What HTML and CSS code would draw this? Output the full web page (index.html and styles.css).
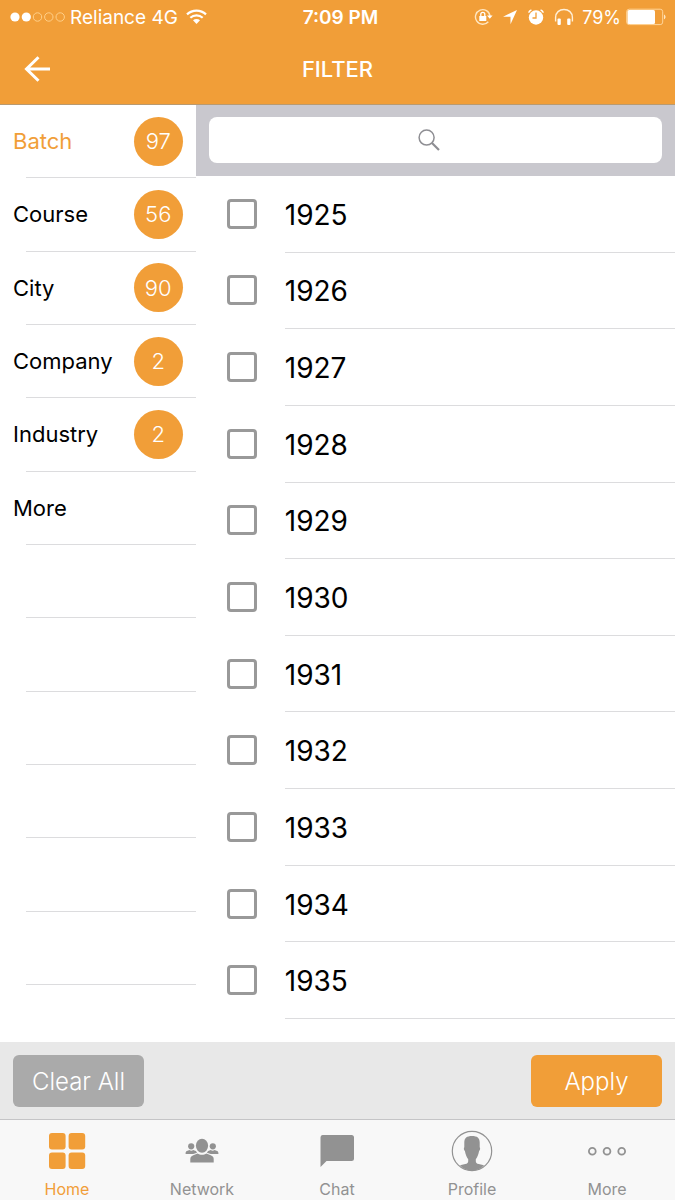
FILE: index.html
```html
<!DOCTYPE html>
<html lang="en">
<head>
<meta charset="utf-8">
<meta name="viewport" content="width=device-width, initial-scale=1">
<title>Filter</title>
<link rel="stylesheet" href="styles.css">
</head>
<body>
<header class="top">
  <div class="status">
    <div class="status-left">
      <svg class="signal" width="56" height="12" viewBox="0 0 56 12" aria-hidden="true">
        <g fill="#fff"><circle cx="5" cy="6" r="4.600"/><circle cx="16.300" cy="6" r="4.600"/></g>
        <g fill="none" stroke="#ffd08a" stroke-width="1"><circle cx="27.500" cy="6" r="4.200"/><circle cx="38.800" cy="6" r="4.200"/><circle cx="50.200" cy="6" r="4.200"/></g>
      </svg>
      <span class="carrier">Reliance 4G</span>
      <svg width="21" height="16" viewBox="0 0 21 16" aria-hidden="true">
        <g fill="none" stroke="#fff" stroke-width="2.200"><path d="M1 5.400C6.300.3 14.700.3 20 5.400"/><path d="M4.300 8.800c3.500-3.300 8.900-3.300 12.400 0"/></g>
        <path fill="#fff" d="M7 11.300c2-1.800 5-1.800 7 0L10.500 15z"/>
      </svg>
    </div>
    <time class="clock">7:09 PM</time>
    <div class="status-right">
      <svg width="19" height="18" viewBox="0 0 19 18" aria-hidden="true">
        <path d="M14.300 13.700A7.300 7.300 0 1 1 16 8" fill="none" stroke="#ffe6c0" stroke-width="1.400"/>
        <path fill="#fff" d="M13 7.500h5.600l-2.800 3.200zM5.300 8h7v5h-7z"/>
        <path d="M6.800 8V6.300a2 2 0 0 1 4 0V8" fill="none" stroke="#fff" stroke-width="1.300"/>
      </svg>
      <svg width="16" height="16" viewBox="0 0 16 16" aria-hidden="true"><path fill="#fff" d="M15 1 8.500 15.200V7.700H1z"/></svg>
      <svg width="18" height="18" viewBox="0 0 18 18" aria-hidden="true">
        <circle cx="9" cy="9.500" r="7.200" fill="#fff"/>
        <path d="M1.700 4.600c.4-1.400 1.300-2.300 2.700-2.700M16.300 4.600c-.4-1.400-1.300-2.300-2.700-2.700" fill="none" stroke="#fff" stroke-width="1.600"/>
        <path d="M9 4.500v5.500H5.500" fill="none" stroke="#f19e38" stroke-width="1.300"/>
      </svg>
      <svg width="20" height="18" viewBox="0 0 20 18" aria-hidden="true">
        <path d="M1.600 13.500V9.500C1.600 4.500 5.300 1.500 10 1.500s8.400 3 8.400 8v4" fill="none" stroke="#fff0d8" stroke-width="1.400"/>
        <rect x="3.500" y="10.500" width="3.300" height="6.500" rx="1" fill="#fff"/><rect x="13.200" y="10.500" width="3.300" height="6.500" rx="1" fill="#fff"/>
      </svg>
      <span class="percent">79%</span>
      <svg width="40" height="18" viewBox="0 0 40 18" aria-hidden="true">
        <rect x=".7" y="1.200" width="36" height="15.400" rx="2.500" fill="none" stroke="#ffd59a"/>
        <rect x="1.500" y="2" width="27.500" height="14" rx="1.500" fill="#fff"/>
        <path d="M38 6.500c2 .8 2 4 0 4.800z" fill="#ffe6c0"/>
      </svg>
    </div>
  </div>
  <nav class="titlebar">
    <button class="back" type="button" aria-label="Back">
      <svg width="28" height="28" viewBox="0 0 28 28" aria-hidden="true"><path d="M15.500 2.300 3.500 14l12 11.700M3.500 14H27" fill="none" stroke="#fff" stroke-width="3"/></svg>
    </button>
    <h1 class="title">FILTER</h1>
  </nav>
</header>

<main class="main">
  <ul class="categories">
    <li><a class="category active" href="#batch">Batch <span class="count">97</span></a></li>
    <li><a class="category" href="#course">Course <span class="count">56</span></a></li>
    <li><a class="category" href="#city">City <span class="count">90</span></a></li>
    <li><a class="category" href="#company">Company <span class="count">2</span></a></li>
    <li><a class="category" href="#industry">Industry <span class="count">2</span></a></li>
    <li><a class="category" href="#more">More</a></li>
    <li></li><li></li><li></li><li></li><li></li><li></li>
  </ul>
  <section class="panel" id="batch">
    <div class="searchbar">
      <label class="search">
        <svg class="search-icon" width="22" height="22" viewBox="0 0 22 22" role="img" aria-label="Search">
          <circle cx="8.600" cy="8.600" r="7.500" fill="none" stroke="#8e8e93" stroke-width="1.500"/><path d="m14 14 7 7" stroke="#8e8e93" stroke-width="2.200"/>
        </svg>
        <input class="search-input" type="search">
      </label>
    </div>
    <div class="options">
      <label class="option"><input class="check" type="checkbox"><span class="year">1925</span></label>
      <label class="option"><input class="check" type="checkbox"><span class="year">1926</span></label>
      <label class="option"><input class="check" type="checkbox"><span class="year">1927</span></label>
      <label class="option"><input class="check" type="checkbox"><span class="year">1928</span></label>
      <label class="option"><input class="check" type="checkbox"><span class="year">1929</span></label>
      <label class="option"><input class="check" type="checkbox"><span class="year">1930</span></label>
      <label class="option"><input class="check" type="checkbox"><span class="year">1931</span></label>
      <label class="option"><input class="check" type="checkbox"><span class="year">1932</span></label>
      <label class="option"><input class="check" type="checkbox"><span class="year">1933</span></label>
      <label class="option"><input class="check" type="checkbox"><span class="year">1934</span></label>
      <label class="option"><input class="check" type="checkbox"><span class="year">1935</span></label>
    </div>
  </section>
</main>

<div class="actions">
  <button class="action clear" type="button">Clear All</button>
  <button class="action apply" type="button">Apply</button>
</div>

<nav class="tabs">
  <a class="tab active" href="#home">
    <svg width="44" height="44" viewBox="0 0 44 44" fill="currentColor" aria-hidden="true"><rect x="4" y="4" width="16.600" height="16.400" rx="3"/><rect x="23.600" y="4" width="16.600" height="16.400" rx="3"/><rect x="4" y="23.600" width="16.600" height="16.400" rx="3"/><rect x="23.600" y="23.600" width="16.600" height="16.400" rx="3"/></svg>
    <span>Home</span>
  </a>
  <a class="tab" href="#network">
    <svg width="44" height="44" viewBox="0 0 44 44" fill="currentColor" aria-hidden="true">
      <ellipse cx="22" cy="16.800" rx="6.100" ry="7"/>
      <path d="M10.300 33.500v-3.200c0-2.200 1-3.200 3-4l4.200-1.800c2.600 1.800 6.400 1.800 9 0l4.200 1.800c2 .8 3 1.800 3 4v3.200z"/>
      <circle cx="11.200" cy="17.300" r="3.100"/><circle cx="32.800" cy="17.300" r="3.100"/>
      <path d="M5.600 25v-1c0-1.300.8-1.700 2-2.200l1.800-.7c1.200.8 2.700.8 3.800 0l2.600 1c.8.800 1 1.200 1.200 1.700L13.300 25zM38.400 25v-1c0-1.300-.8-1.700-2-2.200l-1.800-.7c-1.200.8-2.700.8-3.800 0l-2.600 1c-.8.800-1 1.200-1.200 1.700l3.700 1.200z"/>
    </svg>
    <span>Network</span>
  </a>
  <a class="tab" href="#chat">
    <svg width="44" height="44" viewBox="0 0 44 44" fill="currentColor" aria-hidden="true"><path d="M7.500 6h29a2.500 2.500 0 0 1 2.500 2.500v21a2.500 2.500 0 0 1-2.500 2.500H11.500L5.500 38V8.500A2.500 2.500 0 0 1 7.500 6z"/></svg>
    <span>Chat</span>
  </a>
  <a class="tab" href="#profile">
    <svg width="44" height="44" viewBox="0 0 44 44" aria-hidden="true">
      <circle cx="22" cy="22" r="19.700" fill="none" stroke="currentColor" stroke-width="1.200"/>
      <path fill="currentColor" d="M14.300 13.500c0-4.500 2.500-6.500 7.700-6.500s7.700 2 7.700 6.500v4.700c.8.600.4 3.200-.6 3.800-.6 3.500-1.900 6.400-3.300 8.200v2c0 1.700.9 2.300 2.900 2.800l5.300 1.300C31 40 27 41.700 22 41.700S13 40 10 36.300l5.300-1.300c2-.5 2.900-1.100 2.900-2.800v-2c-1.400-1.800-2.700-4.700-3.300-8.200-1-.6-1.400-3.200-.6-3.800z"/>
    </svg>
    <span>Profile</span>
  </a>
  <a class="tab" href="#more-tab">
    <svg width="44" height="44" viewBox="0 0 44 44" fill="none" stroke="currentColor" stroke-width="1.800" aria-hidden="true"><circle cx="7.300" cy="22.200" r="3.400"/><circle cx="22" cy="22.200" r="3.400"/><circle cx="36.700" cy="22.200" r="3.400"/></svg>
    <span>More</span>
  </a>
</nav>
</body>
</html>
```
FILE: styles.css
```css
:root {
  --orange: #f19e38;
  --line: #dcdcde;
}

* { box-sizing: border-box; }

body {
  margin: 0;
  min-height: 100vh;
  display: flex;
  flex-direction: column;
  background: #fff;
  color: #000;
  font-family: Inter, "Liberation Sans", sans-serif;
}

button, input { font: inherit; }
a { color: inherit; text-decoration: none; }

.top {
  background: var(--orange);
  border-bottom: 1px solid #b99a70;
  color: #fff;
}

.status {
  display: grid;
  grid-template-columns: 1fr auto 1fr;
  align-items: center;
  height: 34px;
  padding: 0 9px 0 10px;
  font-size: 19px;
}

.status-left, .status-right {
  display: flex;
  align-items: center;
  gap: 8px;
}

.status-right { justify-content: flex-end; gap: 9px; }
.signal { margin-right: -4px; }

.clock {
  padding-left: 5px;
  font-weight: 600;
}

.percent {
  margin: 0 -4px 0 -1px;
  font-size: 18px;
}

.titlebar {
  display: grid;
  grid-template-columns: 1fr auto 1fr;
  align-items: center;
  height: 70px;
  padding: 0 23px;
}

.back {
  display: flex;
  justify-self: start;
  padding: 0;
  border: 0;
  background: none;
}

.title {
  margin: 0;
  font-size: 22px;
  font-weight: 500;
}

.main {
  flex: 1;
  display: flex;
}

.categories {
  flex: 0 0 29%;
  display: grid;
  grid-template-rows: repeat(12, 1fr);
  margin: 0;
  padding: 0 0 57px;
  list-style: none;
  font-size: 22px;
}

.categories li {
  display: flex;
  background: linear-gradient(var(--line), var(--line)) no-repeat 26px 100% / 100% 1px;
}

.category {
  flex: 1;
  display: flex;
  align-items: center;
  justify-content: space-between;
  padding: 0 13px 1px;
}

.category.active { color: var(--orange); }

.count {
  display: grid;
  place-items: center;
  width: 49px;
  height: 49px;
  border-radius: 50%;
  background: var(--orange);
  color: #fff;
  font-weight: 300;
}

.panel {
  flex: 1;
  display: flex;
  flex-direction: column;
}

.searchbar {
  padding: 12px 13px 13px;
  background: #c9c8ce;
}

.search {
  position: relative;
  display: block;
}

.search-icon {
  position: absolute;
  inset: 0;
  margin: auto;
  left: -12px;
}

.search-input {
  display: block;
  width: 100%;
  height: 46px;
  padding: 0 16px;
  border: 0;
  border-radius: 8px;
  background: #fff;
  font-size: 22px;
}

.options {
  flex: 1;
  display: grid;
  grid-template-rows: repeat(11, 1fr);
  padding-bottom: 23px;
}

.option {
  display: flex;
  align-items: center;
  gap: 28px;
  padding-left: 31px;
}

.check {
  appearance: none;
  width: 30px;
  height: 30px;
  margin: 0 0 1px;
  border: 3px solid #999;
  border-radius: 4px;
}

.check:checked { background: var(--orange); }

.year {
  flex: 1;
  align-self: stretch;
  display: flex;
  align-items: center;
  padding-top: 2px;
  border-bottom: 1px solid var(--line);
  font-size: 28px;
}

.actions {
  display: flex;
  justify-content: space-between;
  padding: 13px 13px 12px;
  background: #e8e8e8;
}

.action {
  width: 131px;
  height: 52px;
  padding: 0;
  border: 0;
  border-radius: 6px;
  color: #fff;
  font-size: 24px;
  font-weight: 300;
}

.clear { background: #aaa; }
.apply { background: var(--orange); }

.tabs {
  display: grid;
  grid-template-columns: repeat(5, 1fr);
  padding-bottom: 1px;
  border-top: 1px solid #c4c4c6;
  background: #f8f8f8;
}

.tab {
  display: flex;
  flex-direction: column;
  align-items: center;
  gap: 6px;
  padding: 9px 1px 0 0;
  color: #929292;
  font-size: 16px;
  line-height: 20px;
}

.tab.active { color: var(--orange); }
```
